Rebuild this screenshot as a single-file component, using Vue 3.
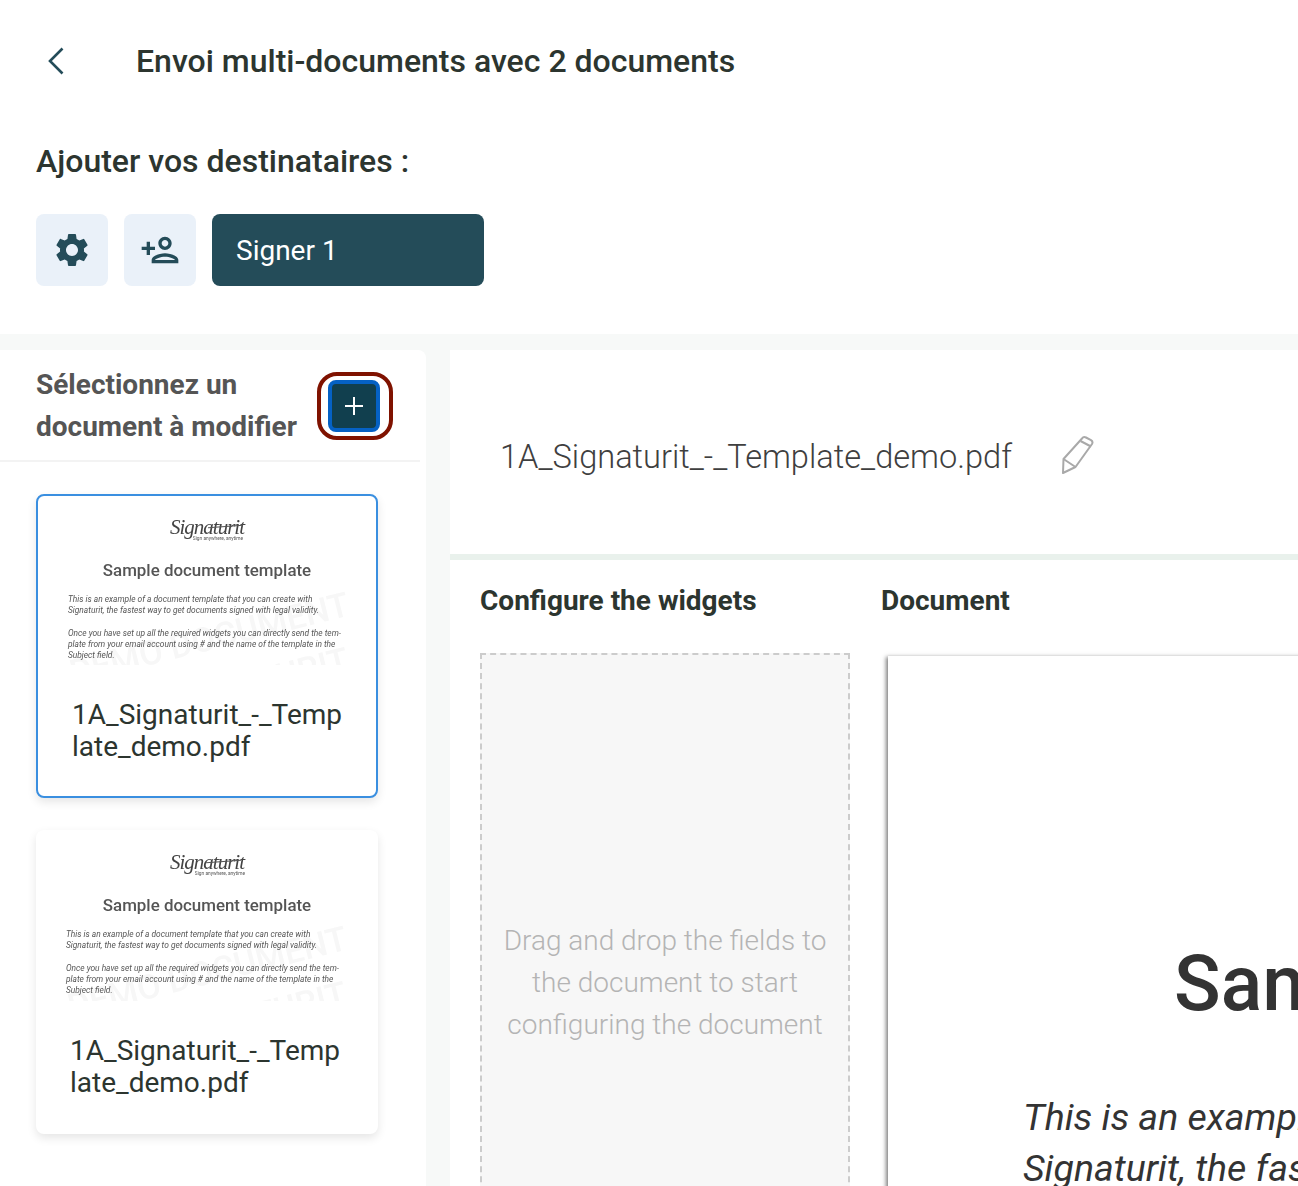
<script setup>
const docs = [
  { id: 1, name: '1A_Signaturit_-_Template_demo.pdf', active: true },
  { id: 2, name: '1A_Signaturit_-_Template_demo.pdf', active: false },
]
</script>

<template>
  <div class="page">
    <header class="top">
      <div class="title-row">
        <button class="back" aria-label="retour">
          <svg width="20" height="30" viewBox="0 0 20 30" fill="none"><path d="M16.500 2.500 4 15l12.500 12.500" stroke="#244c59" stroke-width="2.600"/></svg>
        </button>
        <h1>Envoi multi-documents avec 2 documents</h1>
      </div>
      <h2>Ajouter vos destinataires :</h2>
      <div class="actions">
        <button class="tool">
          <svg width="40" height="40" viewBox="0 0 24 24" fill="#244c59"><path d="M19.140 12.940c.04-.3.06-.61.06-.94 0-.32-.02-.64-.07-.94l2.030-1.580a.49.49 0 0 0 .12-.61l-1.920-3.320a.488.488 0 0 0-.59-.22l-2.390.96c-.5-.38-1.030-.7-1.620-.94l-.36-2.540a.484.484 0 0 0-.48-.41h-3.840c-.24 0-.43.17-.47.41l-.36 2.540c-.59.24-1.130.57-1.620.94l-2.390-.96c-.22-.08-.47 0-.59.22L2.740 8.870c-.12.21-.08.47.12.61l2.030 1.580c-.05.3-.09.63-.09.94s.02.64.07.94l-2.030 1.580a.49.49 0 0 0-.12.61l1.920 3.320c.12.22.37.29.59.22l2.390-.96c.5.38 1.030.7 1.620.94l.36 2.540c.05.24.24.41.48.41h3.840c.24 0 .44-.17.47-.41l.36-2.540c.59-.24 1.130-.56 1.620-.94l2.390.96c.22.08.47 0 .59-.22l1.920-3.320c.12-.22.07-.47-.12-.61l-2.010-1.580zM12 15.600c-1.980 0-3.600-1.620-3.600-3.600s1.620-3.600 3.600-3.600 3.600 1.620 3.600 3.600-1.620 3.600-3.600 3.600z"/></svg>
        </button>
        <button class="tool">
          <svg width="40" height="40" viewBox="0 0 24 24" fill="#244c59"><path d="M15 12c2.210 0 4-1.790 4-4s-1.790-4-4-4-4 1.790-4 4 1.790 4 4 4zm0-6c1.100 0 2 .9 2 2s-.9 2-2 2-2-.9-2-2 .9-2 2-2zm0 8c-2.670 0-8 1.340-8 4v2h16v-2c0-2.660-5.330-4-8-4zm-6 4c.22-.72 3.310-2 6-2 2.700 0 5.800 1.290 6 2H9zm-3-3v-3h3v-2H6V7H4v3H1v2h3v3h2z"/></svg>
        </button>
        <button class="signer">Signer 1</button>
      </div>
    </header>

    <div class="work">
      <aside class="side">
        <div class="side-head">
          <div class="side-title">Sélectionnez un document à modifier</div>
          <div class="ring">
            <button class="add" aria-label="ajouter">
              <svg width="20" height="20" viewBox="0 0 20 20" fill="none"><path d="M10 1v18M1 10h18" stroke="#fff" stroke-width="2"/></svg>
            </button>
          </div>
        </div>
        <div class="cards">
          <article v-for="d in docs" :key="d.id" class="card" :class="{ active: d.active }">
            <div class="thumb">
              <div class="wm wm1">DEMO DOCUMENT</div>
              <div class="wm wm2">SIGNATURIT</div>
              <div class="logo">Signaturit</div>
              <div class="tagline">Sign anywhere, anytime</div>
              <div class="thumb-title">Sample document template</div>
              <p>This is an example of a document template that you can create with<br>Signaturit, the fastest way to get documents signed with legal validity.</p>
              <p>Once you have set up all the required widgets you can directly send the tem-<br>plate from your email account using # and the name of the template in the<br>Subject field.</p>
            </div>
            <div class="card-name">{{ d.name }}</div>
          </article>
        </div>
      </aside>

      <main class="main">
        <div class="name-row">
          <span class="file-name">1A_Signaturit_-_Template_demo.pdf</span>
          <svg class="pencil" width="34" height="40" viewBox="0 0 34 40" fill="none" stroke="#a9a9a9" stroke-width="2" stroke-linejoin="round">
            <path d="M22 3.500c1-1.500 2.500-1.800 4-1l5 2.600c1.500.9 1.800 2.400 1 3.900L15.500 32 3 38l.5-14z"/>
            <path d="M20.500 6 31 11.500M3.500 24l12 8"/>
          </svg>
        </div>
        <div class="panels">
          <section class="widgets">
            <h3>Configure the widgets</h3>
            <div class="drop">Drag and drop the fields to the document to start configuring the document</div>
          </section>
          <section class="doc">
            <h3>Document</h3>
            <div class="sheet">
              <div class="sheet-title">Sample document template</div>
              <p>This is an example of a document template that you can create with<br>Signaturit, the fastest way to get documents signed with legal validity.</p>
            </div>
          </section>
        </div>
      </main>
    </div>
  </div>
</template>

<style>
html, body { margin: 0; overflow: hidden; }
</style>

<style scoped>
.page {
  width: 1298px;
  height: 1186px;
  overflow: hidden;
  background: #f7f9f8;
  font-family: Roboto, "Liberation Sans", sans-serif;
  color: #2c352f;
}
button { border: 0; padding: 0; font-family: inherit; cursor: pointer; }

.top {
  height: 334px;
  box-sizing: border-box;
  background: #fff;
  padding: 36px 36px 0;
}
.title-row { display: flex; align-items: center; height: 50px; }
.back {
  width: 100px;
  background: none;
  display: flex;
  padding-left: 10px;
  box-sizing: border-box;
}
h1 { margin: 0; font-size: 32px; font-weight: 500; line-height: 50px; }
h2 { margin: 50px 0 0; font-size: 32px; font-weight: 500; line-height: 50px; }
.actions { display: flex; gap: 16px; margin-top: 28px; }
.tool {
  width: 72px;
  height: 72px;
  border-radius: 8px;
  background: #eaf1f9;
  display: flex;
  align-items: center;
  justify-content: center;
}
.signer {
  width: 272px;
  height: 72px;
  border-radius: 8px;
  background: #244c59;
  color: #fff;
  font-size: 28px;
  text-align: left;
  padding-left: 24px;
}

.work { display: flex; gap: 24px; margin-top: 16px; align-items: flex-start; }

.side {
  width: 426px;
  height: 836px;
  flex: none;
  background: #fff;
  border-top-right-radius: 8px;
}
.side-head {
  width: 420px;
  height: 112px;
  box-sizing: border-box;
  padding: 14px 0 0 36px;
  border-bottom: 2px solid #f3f3f3;
  display: flex;
  gap: 19px;
}
.side-title {
  width: 262px;
  flex: none;
  font-size: 28px;
  font-weight: 700;
  line-height: 42px;
  color: #555;
}
.ring {
  width: 76px;
  height: 68px;
  box-sizing: border-box;
  margin-top: 8px;
  border: 4px solid #7f1200;
  border-radius: 20px;
  display: flex;
  align-items: center;
  justify-content: center;
}
.add {
  width: 52px;
  height: 52px;
  box-sizing: border-box;
  margin-right: 2px;
  border: 4px solid #0561c4;
  border-radius: 8px;
  background: #113f4e;
  display: flex;
  align-items: center;
  justify-content: center;
}

.cards {
  display: flex;
  flex-direction: column;
  gap: 32px;
  padding: 32px 0 0 36px;
}
.card {
  width: 342px;
  height: 304px;
  box-sizing: border-box;
  border-radius: 8px;
  background: #fff;
  box-shadow: 0 4px 10px rgba(0, 0, 0, .1);
  padding: 0 34px;
}
.card.active { border: 2px solid #3a8fe0; padding-right: 30px; }
.thumb {
  position: relative;
  height: 169px;
  margin: 0 -34px;
  overflow: hidden;
  padding: 21px 30px 0;
  box-sizing: border-box;
  filter: blur(.45px);
  color: #555;
}
.card.active .thumb { margin-right: -30px; }
.card:not(.active) .thumb { height: 171px; padding-top: 22px; }
.logo {
  position: relative;
  text-align: center;
  font: italic 21px/20px "Liberation Serif", serif;
  letter-spacing: -1px;
  color: #444;
}
/* t-bar flourish of the signature */
.logo::after {
  content: "";
  position: absolute;
  left: 140px;
  top: 9px;
  width: 35px;
  height: 1px;
  background: #555;
  transform: rotate(-4deg);
}
.tagline {
  text-align: right;
  padding-right: 103px;
  font-size: 4.800px;
  line-height: 4px;
  position: relative;
}
.thumb-title {
  margin-top: 19px;
  text-align: center;
  font-size: 16.900px;
  font-weight: 500;
  line-height: 20px;
  position: relative;
}
.thumb p {
  margin: 14px 0 0;
  font-size: 8.400px;
  font-style: italic;
  line-height: 11.300px;
  white-space: nowrap;
  position: relative;
}
.thumb p + p { margin-top: 11px; }
.wm {
  position: absolute;
  color: #f7f7f7;
  font-size: 34px;
  font-weight: 500;
  white-space: nowrap;
  transform: rotate(-14deg);
}
.wm1 { left: 28px; top: 122px; }
.wm2 { left: 120px; top: 166px; }
.card-name {
  margin-top: 34px;
  font-size: 28px;
  line-height: 32px;
  word-break: break-all;
}

.main {
  width: 848px;
  flex: none;
  height: 836px;
  background: #fff;
}
.name-row {
  height: 210px;
  box-sizing: border-box;
  padding: 86px 0 0 50px;
  border-bottom: 6px solid #e9f1ec;
  display: flex;
  align-items: flex-start;
  gap: 48px;
}
.file-name {
  font-size: 32.600px;
  font-weight: 300;
  line-height: 42px;
  color: #3f3f3f;
}
.pencil { margin-top: -1px; }
.panels { display: flex; padding-left: 30px; gap: 31px; }
h3 {
  margin: 0;
  font-size: 28px;
  font-weight: 700;
  line-height: 42px;
}
.widgets, .doc { padding-top: 20px; }
.widgets { width: 370px; flex: none; }
.drop {
  height: 660px;
  margin-top: 31px;
  box-sizing: border-box;
  border: 2px dashed #ccc;
  background: #f7f7f7;
  display: flex;
  align-items: center;
  text-align: center;
  padding: 0 16px;
  font-size: 28px;
  font-weight: 300;
  line-height: 42px;
  color: #b4b4b4;
}
.sheet {
  width: 1580px;
  height: 700px;
  box-sizing: border-box;
  margin: 34px 0 0 7px;
  background: #fff;
  box-shadow: -2px 1px 4px rgba(0, 0, 0, .5);
  padding: 283px 0 0 135px;
  color: #333;
}
.sheet-title {
  width: 1252px;
  text-align: center;
  font-size: 77px;
  font-weight: 500;
  line-height: 90px;
}
.sheet p {
  margin: 63px 0 0;
  font-size: 37.500px;
  font-style: italic;
  line-height: 51px;
  white-space: nowrap;
}
</style>
